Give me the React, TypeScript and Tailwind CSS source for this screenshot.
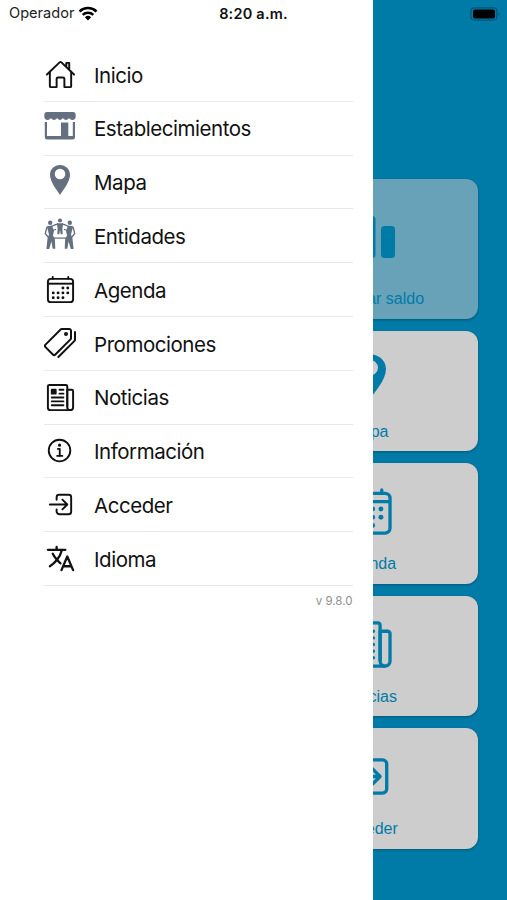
import React from "react";
import {
	IoCalendarOutline,
	IoHomeOutline,
	IoInformationCircleOutline,
	IoLanguageOutline,
	IoLogInOutline,
	IoNewspaperOutline,
	IoPricetagsOutline,
} from "react-icons/io5";

interface Item {
	label: string;
	icon: React.ReactNode;
}

const PinIcon: React.FC<{ className?: string }> = ({ className }) => (
	<svg viewBox="0 0 20 30" preserveAspectRatio="none" className={className} fill="currentColor">
		<path
			fillRule="evenodd"
			d="M10 0C4.4 0 0 4.3 0 9.6 0 17 6.500 24.500 10 30c3.500-5.500 10-13 10-20.400C20 4.300 15.600 0 10 0Zm0 3.700a5.300 5.300 0 1 1 0 10.600 5.300 5.300 0 0 1 0-10.600Z"
		/>
	</svg>
);

const StoreIcon: React.FC = () => (
	<svg viewBox="0 0 32 28" className="h-7 w-8" fill="currentColor">
		<path d="M2.500 0h27Q31.700 0 31.700 2.500v2.300c0 2-1.400 3.200-3.200 3.200s-2.700-.8-3.400-1.900c-.7 1.100-1.800 1.900-3.100 1.900s-2.500-.8-3.100-1.900C18.200 7.200 17.200 8 16 8s-2.200-.8-2.900-1.900C12.500 7.200 11.300 8 10 8s-2.400-.8-3.100-1.900C6.200 7.200 5.300 8 3.500 8S.3 6.800.3 4.800V2.500Q.3 0 2.500 0Z" />
		<path d="M.8 10h2.200v14h14V10.500h7.300V24h4.500V10H31v15.300q0 2.200-2.200 2.200H3q-2.200 0-2.200-2.200Z" />
	</svg>
);

const PeopleIcon: React.FC = () => (
	<svg
		viewBox="0 0 32 32"
		className="size-8"
		fill="none"
		stroke="currentColor"
		strokeWidth="1.300"
		strokeLinecap="round"
		strokeLinejoin="round"
	>
		<g fill="currentColor" stroke="none">
			<circle cx="16" cy="2.500" r="2.100" />
			<circle cx="6.200" cy="4.700" r="2.200" />
			<circle cx="25.800" cy="4.700" r="2.200" />
			<path d="M12.800 5.200h6.400l-.8 5.300.3 5.700h-2l-.7-4.200-.7 4.200h-2l.3-5.700Z" />
			<path d="M2.800 8.200 8 7.600l2 5.400-1 4.500 1.900 4 .4 9.200H8.700L7.400 23.500 5.200 30.900H2.400L3.600 20 5 16.500Z" />
			<path d="M29.200 8.200 24 7.600l-2 5.400 1 4.500-1.900 4-.4 9.200h2.600l1.300-7.200 2.200 7.400h2.800L28.400 20 27 16.500Z" />
		</g>
		<path d="M7 8.800 10.500 7l3-.8M25 8.800 21.500 7l-3-.8M2.800 9.500 1.300 15.500 4 19q3 1.200 12 1.200t12-1.200l2.700-3.500-1.500-6M7.500 13l4-1.500M24.500 13l-4-1.500" />
	</svg>
);

const BarsIcon: React.FC = () => (
	<svg viewBox="0 0 54 48" className="h-12 w-[54px]" fill="currentColor">
		<rect x="0" y="17" width="14" height="29" rx="3.500" />
		<rect x="20.500" y="4" width="14" height="42" rx="3.500" />
		<rect x="40" y="14" width="14" height="32" rx="3.500" />
	</svg>
);

const WifiIcon: React.FC = () => (
	<svg viewBox="0 0 20 15" className="h-[15px] w-5" fill="none" stroke="#000" strokeWidth="2.500">
		<path d="M1.500 5.500a12.300 12.300 0 0 1 17 0M4.700 8.900a7.700 7.700 0 0 1 10.600 0" />
		<path d="M10 14.500 6.900 11.300a4.500 4.500 0 0 1 6.200 0Z" fill="#000" stroke="none" />
	</svg>
);

const BatteryIcon: React.FC = () => (
	<svg viewBox="0 0 31 14" className="h-3.5 w-[31px]">
		<rect x=".9" y=".9" width="26" height="12.200" rx="3.500" fill="none" stroke="#005474" strokeWidth="1.200" />
		<rect x="3" y="2.500" width="22" height="9" rx="2" fill="#000" />
		<path d="M28.700 5.200q2 1.800 0 3.600Z" fill="#005474" />
	</svg>
);

const menu: Item[] = [
	{ label: "Inicio", icon: <IoHomeOutline size={31} /> },
	{
		label: "Establecimientos",
		icon: <span className="-mt-1 text-[#647080]"><StoreIcon /></span>,
	},
	{ label: "Mapa", icon: <PinIcon className="-mt-1 h-[30px] w-5 text-[#647080]" /> },
	{
		label: "Entidades",
		icon: <span className="-mt-1 text-[#647080]"><PeopleIcon /></span>,
	},
	{ label: "Agenda", icon: <IoCalendarOutline size={31} /> },
	{ label: "Promociones", icon: <IoPricetagsOutline size={32} /> },
	{ label: "Noticias", icon: <IoNewspaperOutline size={31} /> },
	{ label: "Información", icon: <IoInformationCircleOutline size={30} /> },
	{ label: "Acceder", icon: <IoLogInOutline size={31} /> },
	{ label: "Idioma", icon: <IoLanguageOutline size={31} className="[&_path]:[stroke-width:38px]" /> },
];

const cards: Item[] = [
	{ label: "Mapa", icon: <PinIcon className="-mt-[5px] h-[46px] w-[34px]" /> },
	{ label: "Agenda", icon: <IoCalendarOutline size={53} /> },
	{ label: "Noticias", icon: <IoNewspaperOutline size={53} /> },
	{ label: "Acceder", icon: <IoLogInOutline size={53} /> },
];

const App: React.FC = () => {
	return (
		<div className="relative h-[900px] w-[507px] overflow-hidden bg-[#007ba7] font-['Inter',sans-serif]">
			<main className="flex flex-col items-end gap-3 pt-[179px] pr-[29px] font-['Liberation_Sans',sans-serif] text-base text-[#007ba7]">
				<section className="flex h-[140px] w-[220px] flex-col items-center rounded-xl bg-[#67a2b8] pt-[33px] shadow-[0_1px_3px_rgba(0,0,0,0.3)]">
					<BarsIcon />
					<p className="mt-[27px] pl-px leading-6">Consultar saldo</p>
				</section>
				{cards.map((card) => (
					<section
						key={card.label}
						className="flex h-[120.4px] w-[220px] flex-col items-center rounded-xl bg-[#cdcdcd] pt-[22px] shadow-[0_1px_3px_rgba(0,0,0,0.3)]"
					>
						<div className="flex h-[53px] items-center pl-px">{card.icon}</div>
						<p className="mt-[14px] pl-px leading-6">{card.label}</p>
					</section>
				))}
			</main>

			<aside className="absolute inset-y-0 left-0 w-[372.5px] bg-white pt-12 pr-5 pl-11">
				<nav>
					{menu.map((item) => (
						<a
							key={item.label}
							className="flex h-[53.8px] items-center gap-[18px] border-b border-[#e9e9e9] text-[20.5px] tracking-[-0.022em] text-[#111]"
						>
							<span className="flex w-8 justify-center">{item.icon}</span>
							<span className="pt-[3px]">{item.label}</span>
						</a>
					))}
				</nav>
				<p className="mt-1.5 text-right text-[11.5px] leading-[18px] text-[#8e8e8e]">v 9.8.0</p>
			</aside>

			<header className="absolute inset-x-0 top-0 flex h-[27px] items-center justify-between pr-1.5 pl-[7px] text-[14.5px]">
				<div className="flex w-32 items-center gap-1 pl-0.5 text-[#222]">
					<span className="text-[14.6px]">Operador</span>
					<WifiIcon />
				</div>
				<b className="pr-px font-semibold tracking-[0.015em] text-[#111]">8:20 a.m.</b>
				<div className="flex w-32 justify-end">
					<BatteryIcon />
				</div>
			</header>
		</div>
	);
};

export default App;
